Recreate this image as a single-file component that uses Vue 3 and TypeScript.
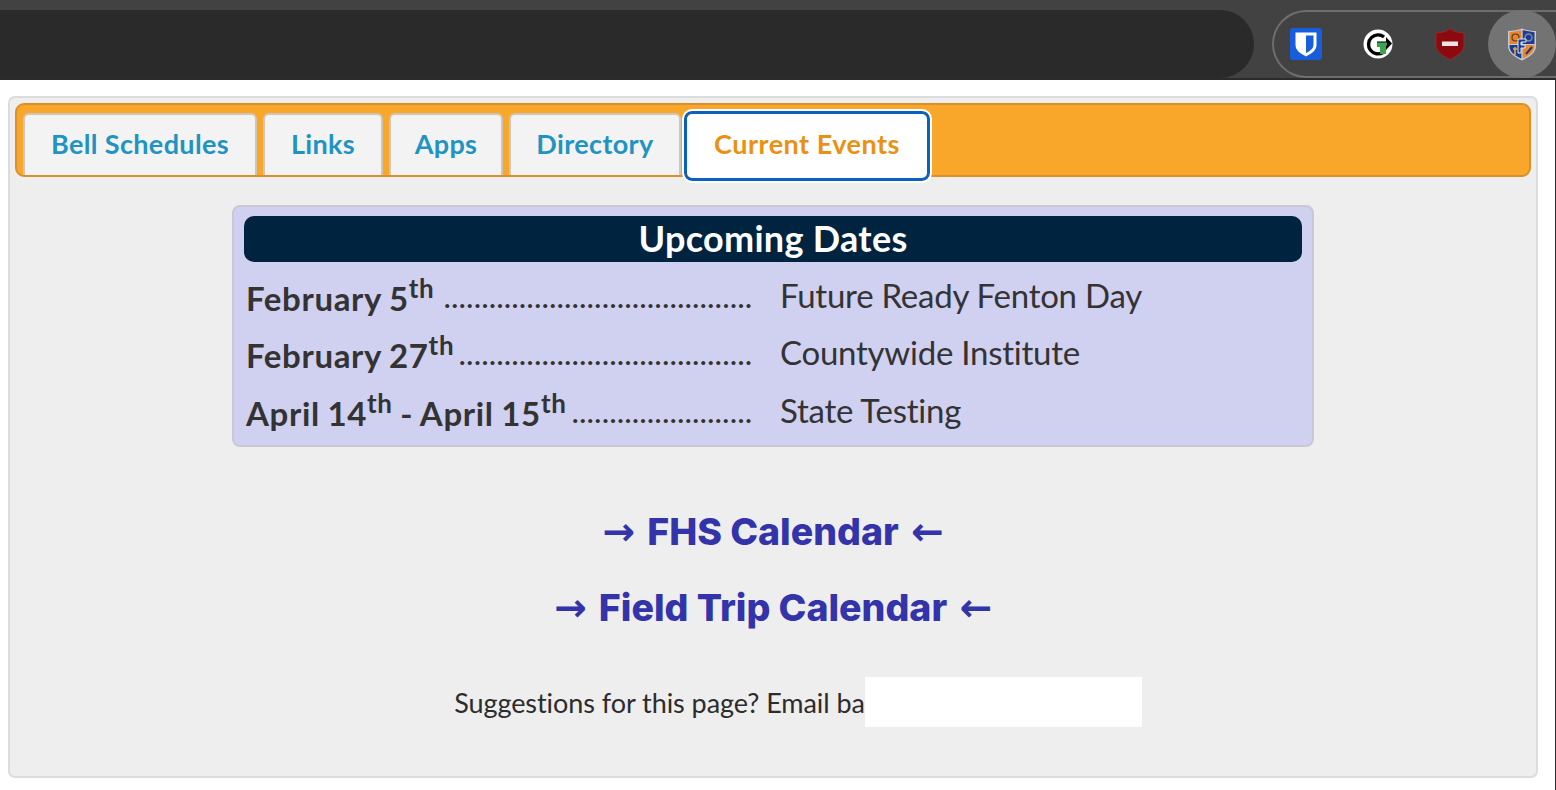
<script setup lang="ts">
const tabs: string[] = ['Bell Schedules', 'Links', 'Apps', 'Directory']
const tabWidths: number[] = [234, 120, 114, 172]
const dates = [
  { parts: [['February 5', 'th']], dots: 41, what: 'Future Ready Fenton Day' },
  { parts: [['February 27', 'th']], dots: 39, what: 'Countywide Institute' },
  { parts: [['April 14', 'th'], [' - April 15', 'th']], dots: 24, what: 'State Testing' },
]
</script>

<template>
  <div class="root">
    <header class="chrome">
      <div class="address"></div>
      <div class="extensions">
        <svg class="ext" width="32" height="32" viewBox="0 0 32 32">
          <rect width="32" height="32" rx="3" fill="#175ddc" />
          <path d="M5.500 4.500h21v12.500c0 5.500-5 8.500-10.500 11.500C10.500 25.500 5.500 22.500 5.500 17z" fill="#fff" />
          <path d="M16 7.500h7.500V17c0 3.500-3.500 6-7.500 8.200z" fill="#175ddc" />
        </svg>
        <svg class="ext" width="30" height="30" viewBox="0 0 30 30">
          <circle cx="15" cy="15" r="14.500" fill="#fff" />
          <path d="M21 8A9.500 9.500 0 1 0 20 23.500" fill="none" stroke="#000" stroke-width="3.400" />
          <path d="M14 12.500h9V8l6 6.500-6 6.500v-4h-9z" fill="#000" />
          <path d="M14 13.500h10v3h-1v8.500h-6v-7h-3z" fill="#3fa34d" />
        </svg>
        <svg class="ext" width="30" height="32" viewBox="0 0 30 32">
          <path d="M15 0.500c3 3 8 4 14 4.500v12c0 7-7 11-14 14.500C8 28 1 24 1 17V5c6-.5 11-1.500 14-4.500z" fill="#8b0a10" stroke="#a33" stroke-width=".6" />
          <rect x="7" y="13.500" width="16" height="4.500" fill="#f3e3e3" />
        </svg>
        <div class="active">
          <svg width="30" height="33" viewBox="0 0 30 33">
            <path d="M1 3C6 3 11 2 15 0.500 19 2 24 3 29 3v15c0 7-7 11-14 14.500C8 29 1 25 1 18z" fill="#dfe6f5" opacity=".75" />
            <path d="M2.500 4.200 14.300 2.300V16H2.500z" fill="#e9862c" />
            <path d="M15.700 2.300 27.500 4.200V16H15.700z" fill="#1f3c88" />
            <path d="M2.500 17h11.800v13.500C8 28 2.500 24 2.500 18z" fill="#1f3c88" />
            <path d="M15.700 17h11.800v1c0 6-5.500 10-11.800 12.500z" fill="#e9862c" />
            <circle cx="8.500" cy="9.500" r="3.500" fill="none" stroke="#5a3a1a" stroke-width="1.200" />
            <circle cx="21.500" cy="9.500" r="3.500" fill="none" stroke="#7a88b8" stroke-width="1.500" />
            <path d="M8 19v8M6 21h4" stroke="#e9a25c" stroke-width="1.600" />
            <path d="M19 26l6-7" stroke="#27346e" stroke-width="2" />
            <path d="M11 11h8v3h-5v3h4v3h-4v5h-3z" fill="#1f3c88" stroke="#dfe6f5" stroke-width="1" />
          </svg>
        </div>
      </div>
    </header>

    <div class="body-row">
      <main class="page">
        <section class="panel">
          <nav class="tabbar">
            <a
              v-for="(tab, i) in tabs"
              :key="tab"
              class="tab"
              :style="{ width: tabWidths[i] + 'px' }"
            >{{ tab }}</a>
            <a class="tab current">Current Events</a>
          </nav>

          <div class="card">
            <h2 class="card-title">Upcoming Dates</h2>
            <div v-for="d in dates" :key="d.what" class="row">
              <div class="when">
                <span class="when-text"><template v-for="p in d.parts" :key="p[0]">{{ p[0] }}<sup>{{ p[1] }}</sup></template></span>
                <span class="leader">{{ '.'.repeat(d.dots) }}</span>
              </div>
              <div class="what">{{ d.what }}</div>
            </div>
          </div>

          <a class="cal first"><span class="arrow">→</span> FHS Calendar <span class="arrow">←</span></a>
          <a class="cal second"><span class="arrow">→</span> Field Trip Calendar <span class="arrow">←</span></a>

          <div class="suggest">
            <span>Suggestions for this page? Email ba</span>
            <span class="redact"></span>
          </div>
        </section>
      </main>
      <div class="edge"></div>
    </div>
  </div>
</template>

<style>
html, body { margin: 0; background: #fff; overflow: hidden; }
</style>

<style scoped>
.root {
  width: 1556px;
  height: 790px;
  overflow: hidden;
  background: #fff;
  font-family: "Lato", "DejaVu Sans", sans-serif;
  color: #333;
}
.chrome {
  height: 80px;
  box-sizing: border-box;
  background: #424242;
  padding-top: 10px;
  border-bottom: 2px solid #2b2b2b;
  display: flex;
  align-items: stretch;
}
.address {
  width: 1254px;
  height: 68px;
  background: #2a2a2a;
  border-radius: 0 34px 34px 0;
  flex: none;
}
.extensions {
  margin-left: 18px;
  flex: 1;
  height: 68px;
  box-sizing: border-box;
  border: 2px solid #6e6e6e;
  border-right: none;
  border-radius: 34px 0 0 34px;
  display: flex;
  align-items: center;
  padding-left: 15.500px;
}
.ext { flex: none; margin-right: 41.500px; }
.ext:nth-child(2) { margin-right: 41.500px; }
.ext:nth-child(3) { margin-right: 23px; }
.active {
  width: 68px;
  height: 68px;
  flex: none;
  margin: -2px 0;
  border-radius: 50%;
  background: #737373;
  display: flex;
  align-items: center;
  justify-content: center;
}
.body-row {
  display: flex;
  height: 710px;
}
.edge {
  width: 1px;
  flex: none;
  margin-left: 17px;
  background: #2b2b2b;
}
.page {
  flex: none;
  padding: 16px 0 0 8px;
  box-sizing: border-box;
}
.panel {
  width: 1530px;
  height: 682px;
  box-sizing: border-box;
  background: #eeeeee;
  border: 2px solid #dcdcdc;
  border-radius: 7px;
  padding: 5px 5px 0 5px;
  display: flex;
  flex-direction: column;
  align-items: center;
}
.tabbar {
  align-self: stretch;
  height: 74px;
  box-sizing: border-box;
  background: #f9a72b;
  border: 2px solid #dc9029;
  border-radius: 9px;
  padding: 8px 0 0 6px;
  display: flex;
  align-items: flex-start;
  gap: 6px;
  margin-bottom: 28px;
}
.tab {
  height: 62px;
  box-sizing: border-box;
  background: #f3f3f3;
  border: 2px solid #cfc6b8;
  border-bottom: none;
  border-radius: 6px 6px 0 0;
  display: flex;
  align-items: center;
  justify-content: center;
  padding-bottom: 4px;
  color: #1f94c2;
  font-size: 27px;
  font-weight: 700;
  letter-spacing: .36px;
  flex: none;
}
.current {
  width: 246px;
  height: 70px;
  margin: -2px 0 0 -3px;
  background: #fff;
  border: 3px solid #0a62bd;
  outline: 2px solid #fff;
  border-radius: 8px;
  color: #ea9114;
  padding-bottom: 5px;
  letter-spacing: .5px;
}
.card {
  width: 1082px;
  height: 242px;
  box-sizing: border-box;
  background: #d0d0f0;
  border: 2px solid #c9c9d4;
  border-radius: 8px;
  padding: 9px 10px 0;
}
.card-title {
  margin: 0 0 7px;
  height: 46px;
  background: #00233f;
  border-radius: 10px;
  color: #fff;
  font-size: 36px;
  font-weight: 700;
  letter-spacing: .3px;
  line-height: 45px;
  text-align: center;
}
.row {
  height: 57.500px;
  display: flex;
  align-items: flex-end;
  padding-left: 2px;
  box-sizing: border-box;
  white-space: nowrap;
}
.when {
  width: 507px;
  display: flex;
  justify-content: space-between;
  font-weight: 700;
  font-size: 33px;
  line-height: 40px;
  letter-spacing: .65px;
  margin-bottom: 9px;
}
.when-text { flex: none; word-spacing: -1px; }
sup { font-size: 26px; line-height: 0; vertical-align: 13px; }
.leader {
  flex: none;
  font-size: 25px;
  font-weight: 900;
  letter-spacing: 1.580px;
}
.what {
  margin-left: 27px;
  font-size: 33px;
  line-height: 40px;
  letter-spacing: -.25px;
  margin-bottom: 12px;
}
.cal {
  color: #3333aa;
  font-family: "Inter", "Lato", sans-serif;
  font-weight: 800;
  font-size: 37.500px;
  line-height: 46px;
  white-space: nowrap;
}
.arrow {
  font-family: "DejaVu Sans", sans-serif;
  font-weight: 700;
  font-size: 39px;
  margin: 0 4px;
}
.first { margin-top: 62px; }
.second { margin-top: 30px; }
.suggest {
  margin: 46px 0 0 50px;
  height: 50px;
  display: flex;
  align-items: center;
  font-size: 27px;
  letter-spacing: -.06px;
  color: #2c2c2c;
}
.redact { width: 277px; height: 50px; background: #fff; }
</style>
